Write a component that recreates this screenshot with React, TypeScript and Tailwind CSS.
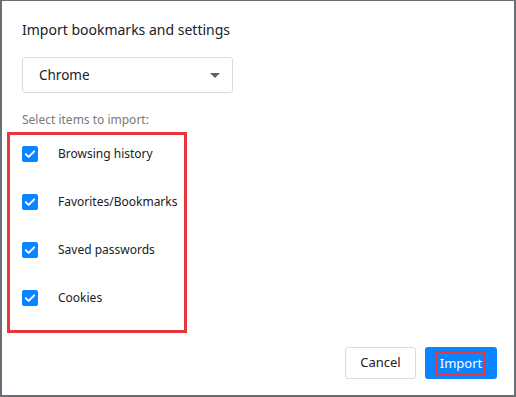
import React, { useState } from "react";

const ITEMS = ["Browsing history", "Favorites/Bookmarks", "Saved passwords", "Cookies"];

function CheckBox({ checked }: { checked: boolean }) {
  return (
    <span className="flex h-4 w-4 shrink-0 items-center justify-center rounded-[2px] bg-[#0a84ff]">
      {checked && (
        <svg viewBox="0 0 16 16" className="h-4 w-4">
          <path d="M3.8 8.2l2.8 2.7 5.6-5.6" fill="none" stroke="#fff" strokeWidth="1.9" strokeLinecap="round" strokeLinejoin="round" />
        </svg>
      )}
    </span>
  );
}

export default function App() {
  const [checked, setChecked] = useState<boolean[]>([true, true, true, true]);

  return (
    <div className="h-[397px] w-[516px] overflow-hidden bg-[#6b6e72] pl-[2px] pt-px pr-[2px] pb-[2px] font-['Noto_Sans',sans-serif]">
      <div className="flex h-full flex-col bg-white pl-[20px] pr-[17px] pt-[16px]">
        {/* Title */}
        <h1 className="shrink-0 text-[14px] leading-[26px] text-[#202124]">Import bookmarks and settings</h1>

        {/* Browser select */}
        <div className="mt-[14px] flex h-[36px] w-[211px] shrink-0 items-center justify-between rounded-[3px] border border-[#dadce0] pl-[16px] pr-[12px]">
          <span className="text-[13.5px] text-[#202124]">Chrome</span>
          <svg viewBox="0 0 10 5" className="h-[5px] w-[10px]">
            <path d="M0 0h10L5 5z" fill="#5f6368" />
          </svg>
        </div>

        <p className="mt-[18px] shrink-0 text-[12px] leading-[18px] text-[#7a7a7a]">Select items to import:</p>

        {/* Items, highlighted */}
        <div className="-ml-[15px] mt-[3px] flex w-[180px] shrink-0 flex-col gap-[32px] border-[3px] border-[#e8363c] pb-[24px] pl-[12px] pt-[11px]">
          {ITEMS.map((label, i) => (
            <label
              key={label}
              className="flex h-[16px] cursor-pointer items-center gap-[20px]"
              onClick={() => setChecked((c) => c.map((v, j) => (j === i ? !v : v)))}
            >
              <CheckBox checked={checked[i]} />
              <span className="whitespace-nowrap text-[12px] text-[#202124]">{label}</span>
            </label>
          ))}
        </div>

        {/* Footer */}
        <div className="mt-auto mb-[16px] flex shrink-0 justify-end gap-[9px]">
          <button className="h-[32px] w-[71px] rounded-[3px] border border-[#dadce0] bg-white text-[13px] text-[#202124]">
            Cancel
          </button>
          <button className="flex h-[32px] w-[72px] items-center justify-center rounded-[3px] bg-[#0a84ff]">
            <span className="border-[2px] border-[#e8363c] px-[2px] text-[13px] leading-[20px] text-white">Import</span>
          </button>
        </div>
      </div>
    </div>
  );
}
